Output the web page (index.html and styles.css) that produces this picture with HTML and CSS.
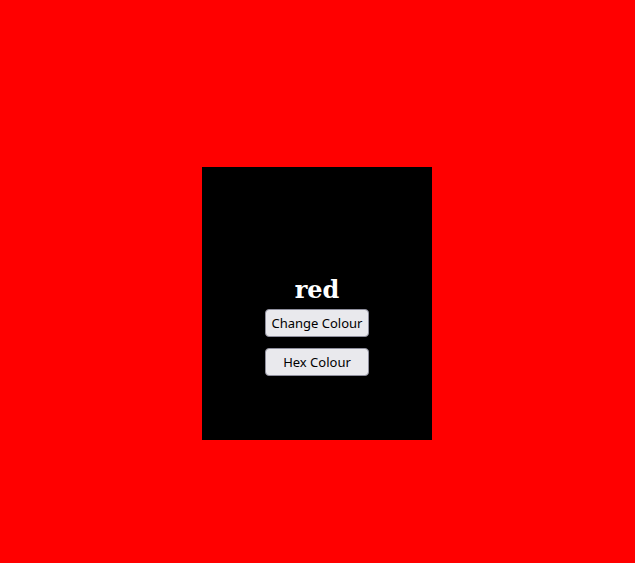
FILE: index.html
```html
<!DOCTYPE html>
<html>
<head>
<meta charset="utf-8">
<link rel="stylesheet" href="styles.css">
</head>
<body>
<div class="panel">
  <h2 class="title">red</h2>
  <button class="btn">Change Colour</button>
  <button class="btn">Hex Colour</button>
</div>
</body>
</html>
```
FILE: styles.css
```css
html, body {
  margin: 0;
  padding: 0;
  background: #ff0000;
  height: 100%;
}
body {
  padding-top: 167px;
  padding-left: 202px;
  box-sizing: border-box;
}
.panel {
  width: 230px;
  height: 273px;
  background: #000;
  display: flex;
  flex-direction: column;
  align-items: center;
  padding-top: 109px;
  box-sizing: border-box;
}
.title {
  margin: 0;
  color: #fff;
  font-family: "DejaVu Serif", serif;
  font-weight: bold;
  font-size: 24px;
  line-height: 28px;
  margin-bottom: 5px;
}
.btn {
  width: 104px;
  height: 28px;
  background: #e9e9ed;
  border: 1px solid #8f8f9d;
  border-radius: 4px;
  color: #000;
  font-family: "Noto Sans", sans-serif;
  font-size: 13px;
  padding: 0;
  margin: 0 0 11px 0;
}
```
